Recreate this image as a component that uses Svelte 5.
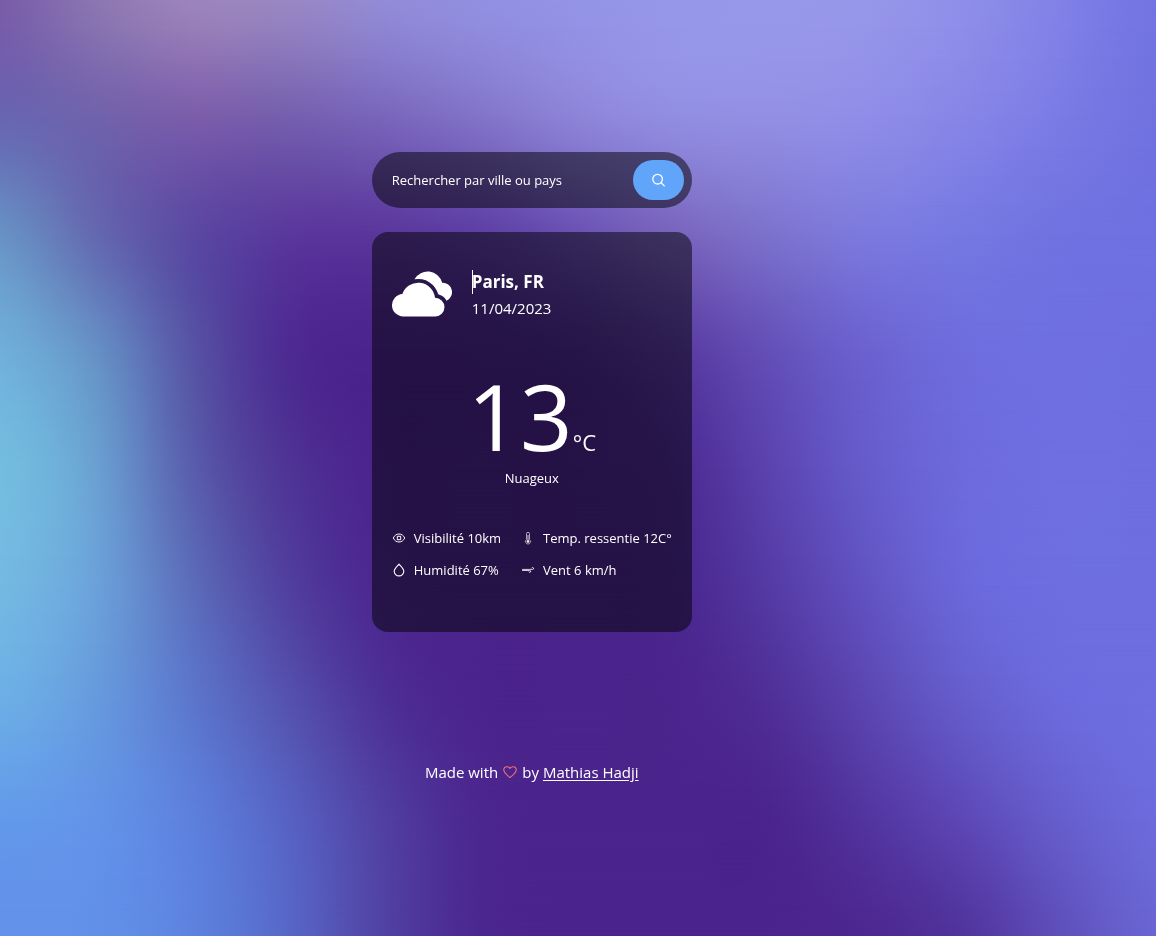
<script lang="ts">
  // Colour mesh: key colours on an even grid, smoothed into denser rows and columns.
  const mesh = [
    '7a5caa 8d76b2 9d85bc 9987c4 938cd7 9290e2 9494e7 9797ea 9898eb 9696ea 8f8fe9 8181e7 7374e3',
    '6865b1 7062ac 7b5dab 755fae 7966bc 8274c9 8d84d8 918ee2 928fe4 8f8de7 8785e7 7b7be5 7171e1',
    '6892c6 6468af 5a49a3 5a389c 5a379c 5e3fa4 6a51b3 7864bd 7c72cd 7c7ade 7678e2 7172e1 6f70e1',
    '70afda 6690c6 5753a5 4d2b91 4b248c 4b258d 4c2b91 583aa1 6450b8 6b62d0 6f6dde 6f6fe1 6e6ee0',
    '73bddf 6aa0d2 595dac 4f3495 4b248d 4b248c 4b248c 4e2b94 5b44af 665ccc 6d6adc 6f6fe1 6e6ee0',
    '74b9e2 6ba1d9 5c6cba 513f9e 4c278f 4b248c 4b248c 4b2790 553ba5 6253c2 6b68db 6e6ee0 6e6ee0',
    '6daee6 669ade 5c76cc 5552ae 4d3096 4b248c 4b248c 4b258c 502f98 5b46b1 655dcc 6c6add 6e6ee0',
    '639aea 6393e8 5d80dc 5762c3 513fa1 4b278f 4b248c 4b248c 4b258e 5335a0 5d48b6 665ecd 6d6bdd',
    '6391e9 6290e8 5d82de 5767c7 5141a4 4b2790 4b248c 4b248c 4b248c 4d2891 51349d 5f4fba 6965d2'
  ].map((row) => row.split(' ').map((hex) => [0, 2, 4].map((k) => parseInt(hex.slice(k, k + 2), 16))));

  type Colour = number[];
  const DENSITY = 4;

  // Catmull-Rom interpolation between neighbouring entries.
  function densify<T>(items: T[], blend: (a: T, b: T, c: T, d: T, t: number) => T): T[] {
    const at = (i: number) => items[Math.max(0, Math.min(items.length - 1, i))];
    const count = (items.length - 1) * DENSITY;
    return Array.from({ length: count + 1 }, (_, n) => {
      const i = Math.floor(n / DENSITY);
      return blend(at(i - 1), at(i), at(i + 1), at(i + 2), (n % DENSITY) / DENSITY);
    });
  }

  const spline = (a: number, b: number, c: number, d: number, t: number) =>
    b + 0.5 * t * (c - a + t * (2 * a - 5 * b + 4 * c - d + t * (3 * (b - c) + d - a)));

  const blendColour = (a: Colour, b: Colour, c: Colour, d: Colour, t: number): Colour =>
    b.map((_, k) => spline(a[k], b[k], c[k], d[k], t));

  const rows = densify(
    mesh.map((row) => densify(row, blendColour)),
    (a, b, c, d, t) => b.map((_, k) => blendColour(a[k], b[k], c[k], d[k], t))
  );

  const gradientFor = (row: Colour[]) =>
    `linear-gradient(to right, ${row.map((c) => `rgb(${c.map(Math.round).join(' ')})`).join(', ')})`;

  const step = 100 / (rows.length - 1);
  const maskFor = (i: number) =>
    i === 0 ? 'none' : `linear-gradient(to bottom, transparent ${(i - 1) * step}%, #000 ${i * step}%)`;

  let city = $state('');
</script>

<div class="backdrop" aria-hidden="true">
  {#each rows as row, i}
    <div class="layer" style:background-image={gradientFor(row)} style:mask-image={maskFor(i)}></div>
  {/each}
</div>

<div class="page">
  <main>
    <form class="search" onsubmit={(e) => e.preventDefault()}>
      <input type="text" aria-label="Rechercher par ville ou pays" placeholder="Rechercher par ville ou pays" bind:value={city} />
      <button type="submit" aria-label="Rechercher">
        <svg width="15" height="15" viewBox="0 0 15 15" fill="none" stroke="currentColor" stroke-width="1.3" stroke-linecap="round">
          <circle cx="6.6" cy="6.2" r="4.8" />
          <path d="M10.2 9.8 13.3 12.9" />
        </svg>
      </button>
    </form>

    <section class="card">
      <header>
        <svg width="60" height="60" viewBox="0 0 16 16" fill="currentColor" aria-hidden="true">
          <path d="M11.473 9a4.5 4.5 0 0 0-8.72-.99A3 3 0 0 0 3 14h8.5a2.5 2.5 0 1 0-.027-5z" />
          <path d="M14.544 9.772a3.506 3.506 0 0 0-2.225-1.676 5.502 5.502 0 0 0-6.337-4.002 4.002 4.002 0 0 1 7.392.91 2.5 2.5 0 0 1 1.17 4.769z" />
        </svg>
        <div>
          <h1><span class="caret"></span>Paris, FR</h1>
          <p class="date">11/04/2023</p>
        </div>
      </header>

      <div class="reading">
        <p class="temp"><span class="value">13</span><span class="unit">°C</span></p>
        <p class="sky">Nuageux</p>
      </div>

      <ul>
        <li>
          <svg width="14" height="14" viewBox="0 0 14 14" fill="none" stroke="currentColor" stroke-width="1" stroke-linejoin="round" aria-hidden="true">
            <path d="M1.3 7C2.4 4.500 4.500 3 7 3s4.600 1.500 5.700 4C11.600 9.500 9.500 11 7 11S2.400 9.500 1.300 7Z" />
            <path d="M5.300 5.300h3.400v3.400H5.300z" />
          </svg>
          Visibilité 10km
        </li>
        <li>
          <svg width="14" height="14" viewBox="0 0 14 14" fill="none" stroke="currentColor" stroke-width=".6" aria-hidden="true">
            <path d="M5.500 8.500V2.800a1.500 1.500 0 0 1 3 0v5.700a2.500 2.500 0 1 1-3 0Z" />
            <path d="M7 4v6" stroke-width=".8" />
            <circle cx="7" cy="10.500" r="1" fill="currentColor" />
          </svg>
          Temp. ressentie 12C°
        </li>
        <li>
          <svg width="14" height="14" viewBox="0 0 14 14" fill="none" stroke="currentColor" stroke-width="1.1" stroke-linejoin="round" aria-hidden="true">
            <path d="M7 1.200C5 3.400 2.200 6 2.200 8.300a4.800 4.600 0 0 0 9.600 0C11.800 6 9 3.400 7 1.200Z" />
          </svg>
          Humidité 67%
        </li>
        <li>
          <svg width="14" height="14" viewBox="0 0 14 14" fill="none" stroke="currentColor" stroke-width=".8" stroke-linecap="round" aria-hidden="true">
            <path d="M1.500 6.400h10.100a1 1 0 1 0-.9-1.500M1.500 7.500h7.200a1 1 0 1 1-.9 1.500" />
          </svg>
          Vent 6 km/h
        </li>
      </ul>
    </section>
  </main>

  <footer>
    Made with
    <svg width="16" height="16" viewBox="0 0 16 16" fill="none" stroke="#f87171" stroke-width="1.1" stroke-linejoin="round" aria-label="love" role="img">
      <path d="M8 13.500C5.500 11.500 1.800 9 1.800 5.800A3.100 3.100 0 0 1 4.900 2.700C6.200 2.700 7.300 3.300 8 4.400 8.700 3.300 9.800 2.700 11.100 2.700a3.100 3.100 0 0 1 3.100 3.100C14.200 9 10.500 11.500 8 13.500Z" />
    </svg>
    by <a href="#author">Mathias Hadji</a>
  </footer>
</div>

<style>
  :global(body) {
    margin: 0;
    background: #4b248c;
  }

  .backdrop,
  .layer {
    position: absolute;
    inset: 0;
  }

  .backdrop {
    position: fixed;
    z-index: -1;
  }

  .page {
    box-sizing: border-box;
    min-height: 100vh;
    padding: 152px 8% 32px 0;
    display: flex;
    flex-direction: column;
    align-items: center;
    color: #fff;
    font: 13px/20px "Open Sans", "Noto Sans", sans-serif;
  }

  main {
    width: 100%;
    max-width: 320px;
    display: grid;
    gap: 24px;
  }

  .search {
    display: flex;
    align-items: center;
    padding: 8px 8px 8px 20px;
    border-radius: 28px;
    background: rgb(0 0 0 / 50%);
  }

  input {
    flex: 1;
    min-width: 0;
    padding: 0;
    border: 0;
    outline: 0;
    background: none;
    color: inherit;
    font: inherit;
  }

  input::placeholder {
    color: #fff;
    opacity: 1;
  }

  button {
    display: grid;
    place-items: center;
    height: 40px;
    padding: 0 18px;
    border: 0;
    border-radius: 20px;
    background: #60a5fa;
    color: #fff;
  }

  .card {
    padding: 32px 20px 52px;
    border-radius: 16px;
    background: rgb(0 0 0 / 50%);
  }

  header {
    display: flex;
    align-items: center;
    gap: 20px;
  }

  h1,
  p,
  ul {
    margin: 0;
    padding: 0;
  }

  h1 {
    position: relative;
    font-size: 17px;
    line-height: 28px;
  }

  .caret {
    position: absolute;
    left: 0;
    top: 2px;
    width: 1px;
    height: 24px;
    background: #fff;
  }

  .date {
    font-size: 15px;
    line-height: 24px;
  }

  .reading {
    padding: 44px 0 40px;
    display: grid;
    gap: 4px;
    text-align: center;
  }

  .temp {
    display: flex;
    justify-content: center;
    align-items: baseline;
  }

  .value {
    font-size: 92px;
    line-height: 96px;
  }

  .unit {
    font-size: 22px;
    line-height: 32px;
  }

  ul {
    display: grid;
    grid-template-columns: auto auto;
    justify-content: space-between;
    gap: 12px;
    list-style: none;
  }

  li {
    display: flex;
    align-items: center;
    gap: 8px;
    white-space: nowrap;
  }

  footer {
    margin-top: 128px;
    display: flex;
    align-items: center;
    gap: 4px;
    font-size: 15px;
    line-height: 24px;
  }

  a {
    color: inherit;
    text-underline-offset: 2px;
  }
</style>
